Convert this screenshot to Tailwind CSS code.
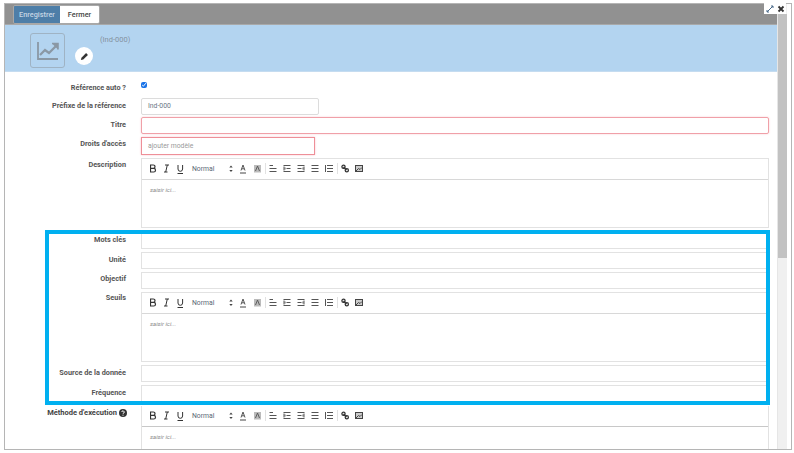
<!DOCTYPE html>
<html><head><meta charset="utf-8"><script src="https://cdn.jsdelivr.net/npm/@tailwindcss/browser@4"></script></head>
<body class="bg-white">
<svg width="0" height="0" class="absolute"><defs>
<symbol id="tb" viewBox="0 0 226 12">
  <g fill="none" stroke="#333" stroke-width="1.200"><path d="M.500 2h2.800a1.600 1.600 0 010 3.400H.500zM.500 5.400h3.200a1.800 1.800 0 010 3.600H.500z"/><path d="M15 2h4M14 9h3.500M17.300 2l-1.600 7" stroke-width="1"/><path d="M28 2v4a2.300 2.300 0 004.600 0V2M27.500 10.500h5.500" stroke-width="1"/></g>
  <text x="42" y="7.800" font-size="6.800" fill="#5a6675" font-family="Roboto,sans-serif">Normal</text>
  <path d="M81 2.500l1.700 2h-3.400zM81 9l-1.700-2h3.400z" fill="#444"/>
  <path d="M91 7.500l2-5.500 2 5.500M91.800 5.800h2.400" fill="none" stroke="#555" stroke-width="1"/><path d="M90 10h6" stroke="#444"/>
  <rect x="104" y="2" width="7" height="7.500" fill="#bbb"/><path d="M105.500 8l2-5 2 5" fill="none" stroke="#555" stroke-width=".9"/>
  <path d="M115.500 0v11" stroke="#e2e2e2"/>
  <g stroke="#555" fill="none"><path d="M119.500 2.500h3.500M119.500 5.500h7M119.500 8.500h7"/><path d="M133.500 2.500h7M136.500 5.500h4M133.500 8.500h7M134 3.500v4M135 4.500v2"/><path d="M147.500 2.500h7M147.500 5.500h4M147.500 8.500h7M154 3.500v4M153 4.500v2"/><path d="M161.500 2.500h7M161.500 5.500h7M161.500 8.500h7"/><path d="M177 2.500h6M177 5.500h6M177 8.500h6M175.500 2v7"/></g>
  <path d="M187.500 0v11" stroke="#e2e2e2"/>
  <g stroke="#333" fill="none"><circle cx="193.500" cy="3.800" r="1.600" stroke-width="1.300"/><circle cx="196.800" cy="7.300" r="1.600" stroke-width="1.300"/><path d="M193.500 4l3 3" stroke-width="1.200"/></g>
  <rect x="205.500" y="2.500" width="7" height="6" fill="#ccc" stroke="#444"/><path d="M206 8l2.500-2.500 1.500 1 2-2" stroke="#444" fill="none"/>
</symbol>
</defs></svg>
<div class="relative w-[794px] h-[453px] overflow-hidden bg-white font-['Roboto','Liberation_Sans',sans-serif]">
  <div class="absolute left-[4px] top-[3px] w-[788px] h-[447px] border border-[#b5b5b5] flex overflow-hidden">
    <main class="w-[772px] shrink-0 flex flex-col">
      <div class="h-[21px] bg-[#919191] flex items-start pl-[8px] pt-[1px] border-b border-[#a9a9a9] shrink-0">
        <div class="flex h-[19px] rounded-[2px] overflow-hidden border border-[#a8a8a8] text-[7.3px] leading-[17px]">
          <span class="w-[46px] text-center bg-[#4d7ea8] text-[#c6d6e4] font-medium">Enregistrer</span>
          <span class="w-[39px] text-center bg-white text-[#444] font-medium">Fermer</span>
        </div>
      </div>
      <div class="h-[47px] bg-[#b3d4f0] border-b border-[#c5dcf0] flex shrink-0 relative">
        <div class="ml-[25px] mt-[8px] w-[35px] h-[35px] border border-[#9fb3c4] rounded-[3px] flex items-center justify-center">
          <svg width="24" height="22" viewBox="0 0 24 22" fill="none" stroke="#8a98a5" stroke-width="2.200"><path d="M2 2v17h20" stroke-width="1.800"/><path d="M4 15l5-5 4 3 8-8" /><path d="M16 3.500h6v6" stroke-width="1.600" fill="#8a98a5"/></svg>
        </div>
        <div class="ml-[10px] mt-[22px] w-[18px] h-[18px] rounded-full bg-white flex items-center justify-center">
          <svg width="9" height="9" viewBox="0 0 10 10" fill="#333"><path d="M1 9l.6-2.600L6.800 1.200l2 2L3.600 8.400z"/></svg>
        </div>
        <span class="ml-[7px] mt-[10px] text-[7.500px] leading-[10px] text-[#84929f]">(Ind-000)</span>
      </div>
      <div class="pt-[8px] flex flex-col text-[7.300px] text-[#555]">
        <div class="h-[18px] flex"><label class="w-[121px] text-right font-bold leading-[12px] pt-[2px]">Référence auto ?</label>
          <input type="checkbox" checked class="ml-[15px] mt-[2px] w-[6px] h-[6px] accent-[#1a73e8]"></div>
        <div class="h-[19px] flex"><label class="w-[121px] text-right font-bold leading-[12px] pt-[2px]">Préfixe de la référence</label>
          <div class="ml-[15px] w-[178px] h-[17px] border border-[#dcdcdc] rounded-[2px] pl-[6px] leading-[15px] text-[6.800px] text-[#6b7785]">Ind-000</div></div>
        <div class="h-[20px] flex"><label class="w-[121px] text-right font-bold leading-[12px] pt-[2px]">Titre</label>
          <div class="ml-[15px] w-[628px] h-[17px] border border-[#f0a0a8] rounded-[2px] shadow-[0_0_2px_#f8c8cc]"></div></div>
        <div class="h-[21px] flex"><label class="w-[121px] text-right font-bold leading-[12px] pt-[1px]">Droits d'accès</label>
          <div class="ml-[15px] w-[174px] h-[18px] border border-[#ee8f98] pl-[6px] leading-[17px] text-[6.800px] text-[#999] shadow-[0_0_2px_#f8c8cc]">ajouter modèle</div></div>
        <div class="h-[74px] flex"><label class="w-[121px] text-right font-bold leading-[12px] pt-[1px]">Description</label>
          <div class="ml-[15px] w-[628px] h-[70px] border border-[#e2e2e2] flex flex-col">
            <div class="h-[21px] border-b border-[#d8d8d8] flex items-center pl-[8px] shrink-0"><svg width="226" height="12"><use href="#tb"/></svg></div>
            <div class="pl-[8px] pt-[4px] text-[6px] italic text-[#888] leading-[12px]">saisir ici...</div>
          </div></div>
        <div class="h-[20px] flex"><label class="w-[121px] text-right font-bold leading-[12px] pt-[2px]">Mots clés</label><div class="ml-[15px] w-[628px] h-[17px] border border-[#e2e2e2]"></div></div>
        <div class="h-[20px] flex"><label class="w-[121px] text-right font-bold leading-[12px] pt-[2px]">Unité</label><div class="ml-[15px] w-[628px] h-[17px] border border-[#e2e2e2]"></div></div>
        <div class="h-[20px] flex"><label class="w-[121px] text-right font-bold leading-[12px] pt-[1px]">Objectif</label><div class="ml-[15px] w-[628px] h-[17px] border border-[#e2e2e2]"></div></div>
        <div class="h-[73px] flex"><label class="w-[121px] text-right font-bold leading-[12px]">Seuils</label>
          <div class="ml-[15px] w-[628px] h-[70px] border border-[#e2e2e2] flex flex-col">
            <div class="h-[21px] border-b border-[#d8d8d8] flex items-center pl-[8px] shrink-0"><svg width="226" height="12"><use href="#tb"/></svg></div>
            <div class="pl-[8px] pt-[4px] text-[6px] italic text-[#888] leading-[12px]">saisir ici...</div>
          </div></div>
        <div class="h-[20px] flex"><label class="w-[121px] text-right font-bold leading-[12px] pt-[2px]">Source de la donnée</label><div class="ml-[15px] w-[628px] h-[17px] border border-[#e2e2e2]"></div></div>
        <div class="h-[21px] flex"><label class="w-[121px] text-right font-bold leading-[12px] pt-[2px]">Fréquence</label><div class="ml-[15px] w-[628px] h-[17px] border border-[#e2e2e2]"></div></div>
        <div class="flex"><label class="w-[121px] flex justify-end items-start gap-[2px] font-bold text-[7.500px] leading-[12px] text-[#444] pt-[1px]">Méthode d'exécution
            <svg width="8" height="8" viewBox="0 0 8 8" class="mt-[2px] mr-[-1px] shrink-0"><circle cx="4" cy="4" r="4" fill="#333"/><path d="M2.800 3a1.200 1.200 0 112 1c-.6.400-.8.600-.8 1" stroke="#fff" fill="none"/><rect x="3.500" y="5.700" width="1" height="1" fill="#fff"/></svg></label>
          <div class="ml-[15px] w-[628px] h-[70px] border-x border-[#e2e2e2] flex flex-col">
            <div class="h-[21px] border-b border-[#c8c8c8] flex items-center pl-[8px] shrink-0"><svg width="226" height="12"><use href="#tb"/></svg></div>
            <div class="pl-[8px] pt-[4px] text-[6px] italic text-[#888] leading-[12px]">saisir ici...</div>
          </div></div>
      </div>
    </main>
    <aside class="w-[10px] bg-[#f0f0f0] border-l border-[#e6e6e6] shrink-0"><div class="h-[244px] mt-[10px] bg-[#c2c2c2]"></div></aside>
  </div>
  <div class="absolute left-[764px] top-[3px] w-[22px] h-[11px] flex bg-white">
    <span class="w-[11px] flex items-center justify-center"><svg width="8" height="8" viewBox="0 0 8 8" fill="none" stroke="#4a6a8a"><path d="M1 7l6-6M5 1h2v2M1 5v2h2"/></svg></span>
    <span class="w-[11px] flex items-center justify-center"><svg width="8" height="8" viewBox="0 0 8 8" fill="none" stroke="#333" stroke-width="1.800"><path d="M1.500 1.500l5 5M6.500 1.500l-5 5"/></svg></span>
  </div>
  <div class="absolute left-[45px] top-[230px] w-[725px] h-[175px] border-[4px] border-[#00b0f0]"></div>
</div>
</body></html>
